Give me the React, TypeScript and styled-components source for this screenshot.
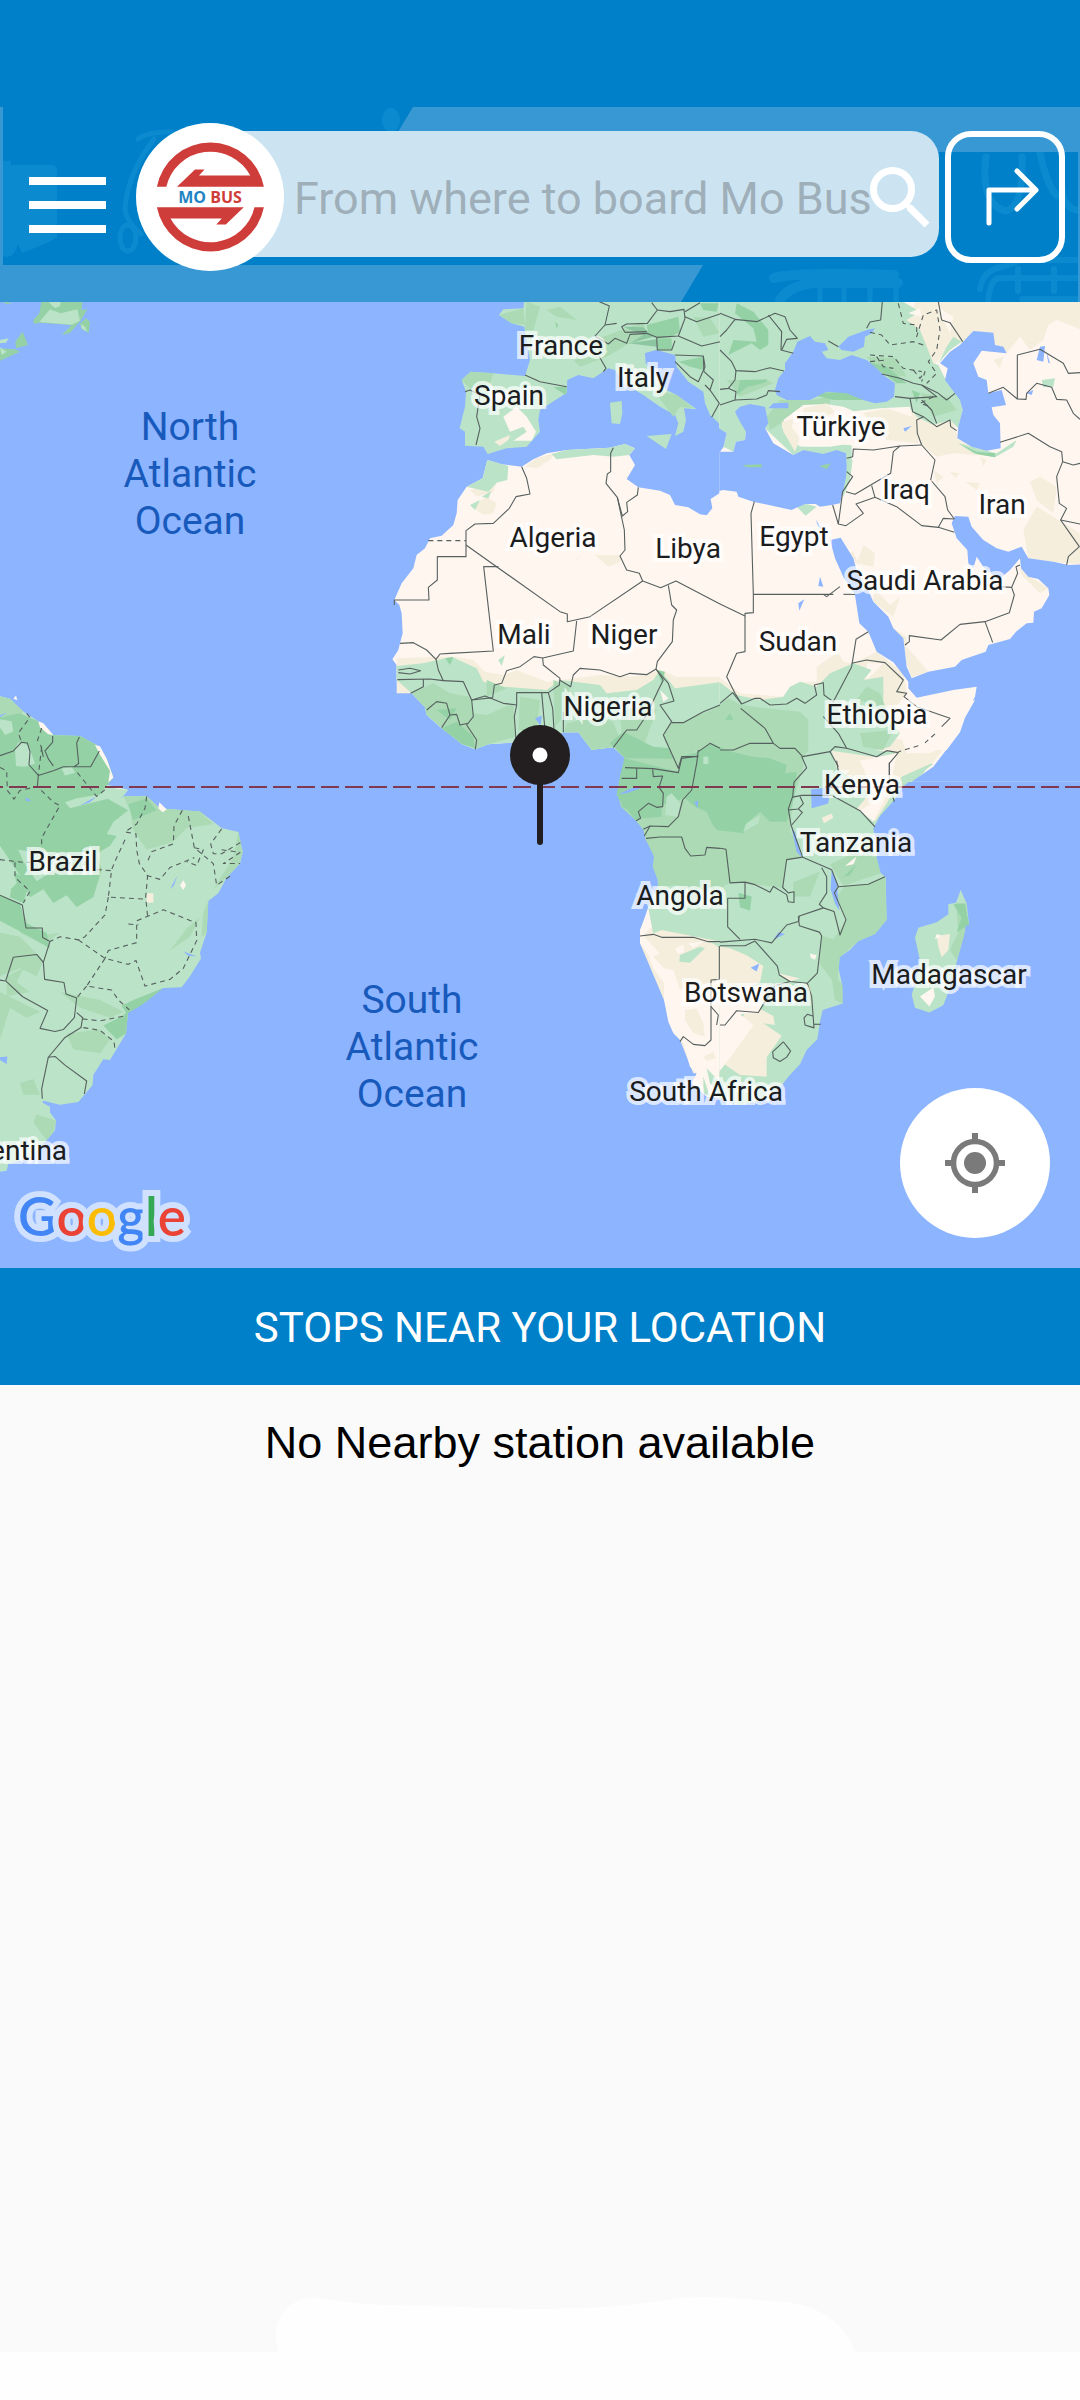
import React from "react";
import styled, { createGlobalStyle } from "styled-components";

const color = {
  brand: "#0080c8",
  band: "#3898d3",
  sketch: "#0c8ad0",
  field: "#cce4f2",
  hint: "#9fafb9",
  sea: "#8cb4ff",
  sand: "#fff6f0",
  dune: "#f5eedd",
  leaf: "#bbe3c7",
  grove: "#abdab5",
  forest: "#94d2a6",
  border: "#56605f",
  page: "#fafafa",
};

const GlobalStyle = createGlobalStyle`
  *, *::before, *::after { box-sizing: border-box; }
  body { margin: 0; background: #fff; font-family: Roboto, "Noto Sans", sans-serif; }
  button { padding: 0; border: 0; background: none; cursor: pointer; font: inherit; }
`;

const Page = styled.div`
  display: flex;
  flex-direction: column;
  min-height: 100vh;
`;

const StatusBar = styled.div`
  height: 107px;
  background: ${color.brand};
`;

const Header = styled.header`
  position: relative;
  display: flex;
  align-items: center;
  padding: 16px 15px 31px 29px;
  background: ${color.brand};
`;

const Backdrop = styled.svg`
  position: absolute;
  inset: 0;
  width: 100%;
  height: 100%;
`;

const MenuButton = styled.button`
  position: relative;
  display: flex;
  flex-direction: column;
  flex: none;
  gap: 16px;
  width: 77px;
  margin: 16px 30px 0 0;
`;

const MenuLine = styled.span`
  height: 8px;
  background: #fff;
`;

const Logo = styled.div`
  position: relative;
  z-index: 1;
  display: grid;
  flex: none;
  place-items: center;
  width: 148px;
  height: 148px;
  border-radius: 50%;
  background: #fff;
`;

const LogoMark = styled.svg`
  grid-area: 1 / 1;
  width: 148px;
  height: 148px;
`;

const LogoText = styled.span`
  grid-area: 1 / 1;
  color: #cf3d3a;
  font: bold 16px/20px "Open Sans", sans-serif;
`;

const LogoTone = styled.span`
  color: #1f83c3;
`;

const SearchForm = styled.form`
  position: relative;
  display: flex;
  flex: 1;
  align-items: center;
  min-width: 0;
  height: 126px;
  margin: 0 6px 6px -74px;
  padding: 6px 9px 0 84px;
  border-radius: 0 28px 28px 0;
  background: ${color.field};
`;

const SearchInput = styled.input`
  flex: 1;
  min-width: 0;
  height: 100%;
  padding: 2px 0 0;
  border: 0;
  outline: 0;
  background: none;
  color: #37474f;
  font: 45px/54px Roboto, sans-serif;
  &::placeholder { color: ${color.hint}; opacity: 1; }
`;

const IconButton = styled.button`
  display: grid;
  flex: none;
  place-items: center;
`;

const DirectionsButton = styled(IconButton)`
  position: relative;
  width: 120px;
  height: 132px;
  border: 6px solid #fff;
  border-radius: 26px;
`;

const MapArea = styled.main`
  position: relative;
  height: 966px;
  overflow: hidden;
  background: ${color.sea};
`;

const MapDrawing = styled.svg`
  display: block;
  width: 100%;
  height: 100%;
`;

const MapLabel = styled.span<{ $x: number; $y: number }>`
  position: absolute;
  left: calc(50% + ${(p) => p.$x - 540}px);
  top: ${(p) => p.$y - 302}px;
  transform: translate(-50%, -50%);
  color: #1b1c1e;
  font-size: 28px;
  line-height: 32px;
  white-space: nowrap;
  -webkit-text-stroke: 8px rgba(255, 255, 255, 0.7);
  paint-order: stroke fill;
`;

const OceanLabel = styled(MapLabel)`
  width: min-content;
  color: #185abc;
  font-size: 39px;
  line-height: 47px;
  text-align: center;
  white-space: normal;
  -webkit-text-stroke: 0;
`;

const Pin = styled.svg`
  position: absolute;
  left: 50%;
  top: 50%;
  transform: translate(-50%, -50%);
`;

const Attribution = styled.div`
  position: absolute;
  left: 18px;
  bottom: 20px;
  display: flex;
  font: 600 53px/64px Lato, sans-serif;
  -webkit-text-stroke: 12px #d0e1ff;
  paint-order: stroke fill;
`;

const AttributionLetter = styled.span<{ $tone: string }>`
  color: ${(p) => p.$tone};
`;

const LocateButton = styled(IconButton)`
  position: absolute;
  right: 30px;
  bottom: 30px;
  width: 150px;
  height: 150px;
  border-radius: 50%;
  background: #fff;
`;

const SectionTitle = styled.h2`
  margin: 0;
  padding: 36px 24px 33px;
  background: ${color.brand};
  color: #fff;
  font-size: 42px;
  font-weight: 400;
  line-height: 48px;
  text-align: center;
`;

const StopList = styled.section`
  display: flex;
  flex: 1;
  flex-direction: column;
  align-items: center;
  justify-content: space-between;
  background: ${color.page};
`;

const EmptyMessage = styled.p`
  margin: 0;
  padding: 32px 24px;
  color: #000;
  font: 45px/52px "Liberation Sans", Arial, sans-serif;
  text-align: center;
`;

const Swell = styled.svg`
  display: block;
`;

const NavigationInset = styled.div`
  height: 48px;
  background: #fefefe;
`;

function HeaderBackdrop() {
  return (
    <Backdrop viewBox="0 0 1080 195" preserveAspectRatio="none" aria-hidden="true">
      <g fill={color.sketch}>
        <ellipse cx="391" cy="13" rx="9" ry="12" />
        <path d="M3 54h8v4h42q4 0 4 8v64q-6 5-35 16l-6-14H3Z" />
        <ellipse cx="7" cy="132" rx="11" ry="18" />
      </g>
      <g fill="none" stroke={color.sketch} strokeWidth="5" strokeLinecap="round">
        <path d="M138 32q10-8 34-7M154 32q-26 34-29 69 0 12 16 26" />
        <ellipse cx="128" cy="131" rx="8" ry="13" />
        <path d="M774 171q20-6 120-3M780 193q8-13 32-17h86" strokeWidth="10" />
        <path d="M820 180v15M844 180v15M870 180v15M896 180v15" />
        <path d="M986 50q-6 48 20 54 18-5 16-54M1040 45q6 32 17 44M1062 82q0 19 18 22" strokeWidth="7" />
        <path d="M980 182q3-19 22-22l20-7h58M988 195q2-24 12-24h80M1018 162v22M1054 162v22M1022 192h58" strokeWidth="6" />
      </g>
      <path fill={color.band} d="M413 0h667v45H386Z" />
      <path fill={color.band} d="M0 0h3v158h700l-22 37H0ZM1078 40h2v155h-2Z" />
    </Backdrop>
  );
}

function BrandLogo() {
  return (
    <Logo>
      <LogoMark viewBox="0 0 148 148" aria-hidden="true">
        <g fill="#cf3d3a">
          <path id="half" d="M20.9 63.7A54.5 54.5 0 0 1 127.9 63.7H41L59 46.5h9.5l-5.5 6h51.3A45.3 45.3 0 0 0 30.3 63.7Z" />
          <use href="#half" transform="rotate(180 74.4 74)" />
        </g>
      </LogoMark>
      <LogoText>
        <LogoTone>MO</LogoTone> BUS
      </LogoText>
    </Logo>
  );
}

const line = {
  fill: "none",
  stroke: color.border,
  strokeWidth: 1.1,
  strokeLinejoin: "round" as const,
};

/* Each region is traced in its own grid and scaled into the map's 1080-wide space. */
const grid = {
  greenland: "translate(0 300) scale(.33333)",
  northWest: "translate(360 300) scale(.33333)",
  northEast: "translate(720 300) scale(.33333)",
  central: "translate(600 640) scale(.33333)",
  southWest: "translate(360 700) scale(.33333)",
  southEast: "translate(720 700) scale(.33333 .35714)",
  america: "translate(0 660) scale(.33333 .39526)",
};

function Borders({ at, lines, dashed }: { at: string; lines: string[]; dashed?: boolean }) {
  return (
    <g transform={at} {...line} strokeDasharray={dashed ? "5 4" : undefined}>
      {lines.map((points) => (
        <polyline key={points} points={points} vectorEffect="non-scaling-stroke" />
      ))}
    </g>
  );
}

function Shapes({ at, fill, shapes }: { at: string; fill: string; shapes: string[] }) {
  return (
    <g transform={at} fill={fill}>
      {shapes.map((points) => (
        <polygon key={points} points={points} />
      ))}
    </g>
  );
}

function World() {
  return (
    <MapDrawing viewBox="0 302 1080 966" preserveAspectRatio="xMidYMid slice" aria-hidden="true">
      {/* North America */}
      <Shapes at={grid.greenland} fill={color.forest} shapes={[
        "125,0 248,0 245,30 262,28 242,62 210,98 185,105 215,75 118,68 102,72 100,60 118,40",
        "0,145 45,148 60,155 0,182", "68,95 84,135 48,145 46,125", "240,70 258,55 270,65 266,98 245,88",
        "0,0 38,12 20,12",
      ]} />
      <Shapes at={grid.greenland} fill={color.leaf} shapes={[
        "150,28 182,40 232,28 240,62 215,74 118,66", "145,5 182,5 180,18 165,25", "0,120 26,115 18,128 0,130",
        "0,142 20,155 5,165", "242,72 255,80 262,95 246,86",
      ]} />

      {/* South America */}
      <Shapes at={grid.america} fill={color.leaf} shapes={[
        "0,92 30,98 70,130 115,155 160,190 240,192 290,215 320,250 340,297 320,315 385,328 370,345 440,345 480,375 550,380 600,383 665,425 715,435 728,485 720,515 680,550 655,590 625,610 620,690 600,740 603,755 570,800 545,828 490,830 430,855 385,885 378,945 330,1012 310,1010 280,1050 278,1075 235,1118 180,1125 130,1115 128,1120 150,1130 150,1145 168,1165 165,1190 140,1215 90,1260 25,1275 20,1292 0,1295",
      ]} />
      <Shapes at={grid.america} fill={color.grove} shapes={[
        "0,92 30,98 70,130 50,150 0,140", "370,345 440,345 480,375 600,383 640,415 560,425 520,460 440,480 400,430 390,380",
        "0,690 60,700 130,760 110,800 60,780 0,800", "625,610 620,690 605,700 610,640", "70,640 100,700 180,690 130,720 60,690",
        "180,840 300,860 370,890 330,905 240,880", "200,945 300,935 330,960 300,995 220,985", "110,1150 168,1165 160,1195 140,1215 100,1170",
        "715,435 728,485 720,515 680,550 640,580 700,500", "20,800 70,780 50,815 90,840 20,850", "510,735 560,680 600,650 570,700",
        "60,1070 100,1060 120,1100 70,1100", "0,840 120,890 80,905 30,880 0,960",
      ]} />
      <Shapes at={grid.america} fill={color.forest} shapes={[
        "0,145 60,135 115,155 160,190 240,192 290,215 320,250 340,297 300,340 385,380 340,410 320,440 350,445 330,470 290,490 305,530 280,600 230,625 200,595 160,615 130,580 90,600 60,545 0,470",
        "40,535 90,560 70,615 30,600", "0,595 60,615 75,665 140,690 150,730 90,700 0,660",
        "440,350 470,380 400,405 385,365", "385,885 378,945 350,960 310,925 370,900", "400,860 490,830 430,870 380,895 365,875",
      ]} />
      <Shapes at={grid.america} fill={color.leaf} shapes={[
        "55,208 85,215 105,262 75,270 48,268 45,225", "0,150 35,155 40,180 15,190 0,170", "195,360 230,350 300,340 330,350 210,375",
        "55,480 135,490 165,530 110,560 70,510", "0,520 40,530 50,565 20,590 0,580", "185,275 215,270 225,285 195,292",
      ]} />
      <Shapes at={grid.america} fill={color.sand} shapes={[
        "115,155 130,160 160,190 145,188 120,170", "285,215 300,218 320,250 340,297 325,310 330,280 300,240", "478,360 500,378 488,385 475,375",
        "550,557 558,570 550,582 540,570", "40,98 48,90 52,102", "320,318 385,328 350,325",
      ]} />
      <Shapes at={grid.america} fill={color.dune} shapes={["440,590 460,590 460,614 440,614"]} />
      <Shapes at={grid.america} fill={color.sea} shapes={[
        "370,345 395,330 360,352", "510,580 532,545 522,570", "550,737 590,750 565,748", "240,368 290,345 270,360", "0,1005 22,1003 20,1022 0,1012", "0,140 22,133 0,145", "75,348 95,355 80,358",
      ]} />
      <Borders at={grid.america} lines={[
        "0,242 40,230 65,208 82,210 90,232 87,265 115,292 160,280 190,270 272,270 298,230",
        "115,292 112,320", "158,192 158,208 135,230 145,250 160,268", "238,195 230,210 236,262 222,270", "122,215 130,245",
        "0,595 67,620 78,678 127,678 128,702 150,712 130,765 134,808 192,816 198,845 230,855 223,905 190,935 165,940 120,932 143,887 68,852 17,812 0,810",
        "17,812 40,752 110,745 130,765", "230,892 248,905 243,930 195,955 145,1005 165,1003 195,1025 260,1065 253,1098",
        "145,1005 125,1085 127,1110",
      ]} />
      <Borders at={grid.america} dashed lines={[
        "80,135 90,145 55,185 65,208", "125,172 112,205", "125,220 115,292", "0,272 20,280 22,330 42,352 60,330 112,320 160,360 180,368 125,450 125,470",
        "232,285 290,345 320,325", "440,345 435,375 410,415 375,435 408,440 410,480 418,515 443,545 437,600 443,650",
        "375,455 350,500 335,530 325,600 437,605", "325,600 315,645 255,700 235,708 180,700 150,712", "235,708 315,755 385,770 408,760 435,825 510,808 550,780 590,710 588,665 490,632 410,660 410,715 325,735 315,755",
        "547,380 522,420 520,465 455,485 440,515", "565,395 583,475 640,515 650,570 690,547", "440,545 480,555 510,525 583,500", "665,427 632,465 640,490 665,490 725,460",
        "583,475 610,480 590,520 560,510", "665,480 720,487 670,515 720,515", "315,755 260,825 335,835 355,860 388,885", "260,825 230,855", "248,908 300,913 378,900",
        "250,930 300,937 342,965 345,985", "0,505 70,512 90,512", "290,530 335,533", "45,512 45,550 90,585 70,615", "385,668 415,670",
      ]} />

      {/* Europe and north-west Africa */}
      <Shapes at={grid.northWest} fill={color.leaf} shapes={[
        "493,0 1090,0 1090,382 1050,345 1035,310 1030,275 985,245 950,200 945,165 890,150 855,160 857,190 880,220 920,270 950,285 1010,328 972,325 978,360 970,395 945,408 955,370 945,345 900,320 850,285 800,255 765,210 745,205 700,235 655,225 622,240 620,278 540,330 535,360 540,395 500,440 440,445 383,462 370,440 315,437 315,395 299,385 315,320 318,275 305,240 332,215 400,220 495,228 510,180 493,80 455,70 417,45 430,28 490,25",
        "750,308 785,303 787,340 780,372 755,370", "860,408 935,402 918,447",
      ]} />
      <Shapes at={grid.northWest} fill={color.grove} shapes={[
        "417,45 490,25 495,75 455,70", "640,180 720,165 700,120 745,105 850,65 860,105 800,135 740,170 660,200", "500,5 540,20 520,90 495,90",
        "305,240 332,215 400,220 390,250 330,265", "880,270 950,285 1000,325 960,320 940,350", "1000,50 1050,55 1080,100 1030,110", "560,30 600,20 650,60 590,50",
      ]} />
      <Shapes at={grid.northWest} fill={color.forest} shapes={[
        "860,75 955,50 960,95 930,112 890,115 865,100", "890,115 935,115 935,148 892,150", "585,65 595,75 590,85", "955,185 1030,170 1030,210 990,200",
        "580,262 620,260 618,285", "1020,10 1075,10 1070,35 1030,30",
      ]} />
      <Shapes at={grid.northWest} fill="#8bc6a0" shapes={["790,80 850,82 880,110 810,130 850,105", "805,130 890,118 890,140"]} />
      <Shapes at={grid.northWest} fill={color.sand} shapes={[
        "382,480 425,493 485,500 520,478 560,460 620,450 750,443 795,432 825,445 808,465 825,495 800,537 835,562 900,572 930,585 945,615 985,622 1020,643 1040,646 1057,625 1052,597 1090,572 1090,1445 790,1445 795,1375 760,1342 695,1349 655,1297 610,1297 580,1310 450,1328 385,1333 345,1348 305,1332 265,1300 245,1285 200,1245 195,1222 155,1180 110,1140 110,1095 97,1078 115,1050 120,1030 128,1000 125,940 118,915 103,900 125,850 160,805 170,765 195,745 210,715 245,707 280,675 290,640 293,600 320,560 368,535",
        "430,350 470,320 500,350 528,395 515,422 460,422 500,395 490,380 450,395", "385,285 430,270 450,300 400,310",
      ]} />
      <Shapes at={grid.northWest} fill={color.dune} shapes={[
        "110,1075 230,1070 285,1070 340,1080 375,1115 430,1125 470,1110 560,1145 600,1140 720,1125 820,1130 900,1110 950,1130 1090,1130 1090,1180 110,1180",
        "495,500 530,475 585,460 570,480 530,505", "705,765 785,765 780,785 745,800", "335,620 380,590 410,610 400,640 370,645", "330,570 385,560 410,545 400,575 350,590",
        "403,425 450,405 445,420 420,438", "645,780 662,762 655,775",
      ]} />
      <Shapes at={grid.northWest} fill={color.leaf} shapes={[
        "382,480 445,498 442,540 410,548 385,575 320,560 368,535", "575,462 620,450 750,443 795,432 825,445 808,465 760,470 700,465 590,478",
        "330,615 360,600 345,630", "365,590 395,572 385,595", "415,1080 435,1065 425,1098",
        "110,1098 190,1090 275,1070 350,1105 370,1145 430,1160 560,1170 600,1140 720,1155 740,1180 830,1170 880,1140 900,1110 945,1165 1090,1145 1090,1445 790,1445 795,1375 760,1342 695,1349 655,1297 610,1297 580,1310 450,1328 385,1333 345,1348 305,1332 265,1300 245,1285 200,1245 195,1222 155,1180 110,1140",
      ]} />
      <Shapes at={grid.northWest} fill={color.grove} shapes={[
        "155,1180 220,1150 270,1180 330,1190 340,1240 380,1245 460,1210 465,1310 385,1333 345,1348 265,1300 200,1245 195,1222",
        "612,1297 620,1270 700,1250 760,1265 780,1320 760,1342 695,1349 655,1297", "580,1140 630,1160 620,1240 585,1280", "780,1250 830,1200 890,1230 850,1340 795,1375",
        "380,1140 440,1165 380,1190", "480,1190 540,1200 530,1290 475,1290",
      ]} />
      <Shapes at={grid.northWest} fill={color.forest} shapes={[
        "245,1285 290,1265 340,1310 345,1345 305,1332", "750,1330 790,1295 820,1310 880,1340 930,1345 955,1405 950,1420 790,1420 795,1375",
        "230,1230 290,1225 270,1260", "890,1110 915,1115 905,1150", "255,1075 280,1072 270,1095",
      ]} />
      <Shapes at={grid.northWest} fill={color.sand} shapes={["900,1170 925,1195 910,1205", "985,1020 1010,1018 1005,1028"]} />
      <Shapes at={grid.northWest} fill={color.sea} shapes={["530,1253 545,1247 542,1275", "855,160 890,150 900,190 880,185"]} />

      {/* Middle East and east Africa */}
      <Shapes at={grid.northEast} fill={color.sand} shapes={["-2,0 1085,0 1085,1445 -2,1445"]} />
      <Shapes at={grid.northEast} fill={color.dune} shapes={[
        "590,0 1085,0 1085,90 1010,60 985,75 970,120 930,150 900,110 860,160 780,150 700,120 640,200 560,60", "560,310 640,340 700,360 715,420 830,470 700,460 650,470 600,430",
        "910,690 950,620 1000,650 1080,700 1080,793 1000,785 925,775", "640,510 670,530 650,550", "690,515 720,520 705,535", "735,545 780,550 770,570", "780,470 800,480 790,500", "930,545 960,530 1010,560 1000,640 950,600",
        "-2,1132 60,1180 190,1190 240,1145 290,1145 290,1100 355,1055 370,1085 400,1090 470,1055 550,1120 560,1180 520,1230 560,1250 500,1300 540,1320 650,1280 700,1310 620,1410 540,1400 450,1440 380,1440 330,1350 -2,1300",
        "430,735 465,760 460,800 410,790", "460,860 510,915 540,890 520,950 460,905", "520,985 560,1010 560,1040 625,1115 575,1132", "380,760 400,755 420,800",
        "895,800 930,830 985,865 960,880 910,830", "820,180 850,170 840,205",
      ]} />
      <Shapes at={grid.northEast} fill={color.sand} shapes={["440,1090 490,1090 440,1140", "550,1190 660,1240 620,1300 560,1270", "600,1300 690,1290 650,1350 560,1390"]} />
      <Shapes at={grid.northEast} fill={color.leaf} shapes={[
        "-2,0 540,0 600,35 560,60 600,90 640,190 655,195 675,235 720,290 728,330 715,385 690,360 640,375 590,350 575,330 530,345 440,350 370,320 300,310 220,330 185,380 215,430 250,440 330,440 395,430 395,480 380,500 360,480 250,450 220,465 135,385 100,310 78,395 75,420 48,425 40,455 10,440 20,400 -2,390",
        "230,620 260,612 290,620 257,647", "700,110 725,125 690,150 655,190 680,140",
        "-2,1146 50,1185 120,1200 190,1190 210,1160 240,1145 290,1160 330,1120 400,1090 455,1110 430,1140 490,1130 490,1230 540,1300 510,1340 440,1360 350,1340 360,1400 380,1445 -2,1445",
        "520,1420 560,1400 600,1400 640,1375 610,1420 580,1445 500,1445", "715,430 830,460 890,420 880,440 825,472 760,460", "965,240 1005,235 1000,260 970,262", "380,480 398,480 390,540 370,590 362,570",
      ]} />
      <Shapes at={grid.northEast} fill={color.grove} shapes={[
        "440,1160 480,1180 500,1230 420,1200 370,1250", "420,1300 520,1290 490,1350 430,1340",
        "180,300 270,300 330,290 330,310 240,330 200,360 150,390 140,350", "440,170 530,175 560,230 480,220", "600,280 680,290 710,330 640,350", "20,240 140,240 160,250 60,290",
      ]} />
      <Shapes at={grid.northEast} fill={color.forest} shapes={[
        "50,10 100,35 145,90 145,135 120,150 95,130 25,165 40,120 110,125 100,85 45,40", "60,240 140,238 140,246 80,262 50,285", "440,185 500,200 560,250 530,250 490,220",
        "715,430 770,455 825,460 825,472 770,462", "260,280 380,275 440,300 340,300", "575,270 600,280 590,310",
      ]} />
      <Shapes at={grid.northEast} fill={color.sand} shapes={[
        "190,360 250,315 320,312 350,340 480,325 570,320 590,430 540,435 430,440 300,425 240,440 210,400", "565,40 600,25 605,50", "650,20 700,50 690,100",
      ]} />
      <Shapes at={grid.northEast} fill={color.dune} shapes={["250,325 320,310 345,335 320,350 250,350", "430,340 500,325 590,355 595,430 500,420", "185,365 225,355 215,380 240,415 225,455 205,420 190,395"]} />
      <Shapes at={grid.northEast} fill={color.sea} shapes={[
        "-2,455 40,455 48,425 75,420 78,395 60,365 45,335 60,320 90,312 135,320 145,370 135,385 160,430 220,465 250,450 310,462 350,450 378,460 380,500 378,530 370,570 360,610 335,615 300,620 287,612 257,612 232,622 215,630 100,605 55,590 50,575 10,570 -2,573",
        "-3,385 20,400 10,442 -3,460",
        "220,155 232,125 270,108 285,125 315,130 325,150 305,155 320,175 360,180 395,165 440,180 470,205 490,225 525,250 522,290 500,305 465,310 430,300 380,280 320,275 270,300 200,300 170,285 165,270 175,235 195,210 195,190",
        "355,140 385,110 440,90 465,85 455,100 435,110 432,140 400,155 365,150", "145,325 160,310 205,308 205,325",
        "760,93 820,98 825,135 850,140 860,160 785,152 760,190 775,230 800,240 805,280 845,270 858,315 815,322 820,345 840,370 842,445 800,452 755,440 712,415 715,380 728,330 720,300 675,240 683,205 660,190 690,155 720,135",
        "575,1135 625,1115 705,1100 725,1080 797,1055 805,1035 870,1017 888,995 920,970 940,968 942,935 965,925 988,885 985,865 955,837 925,830 903,805 900,775 870,810 835,840 790,800 770,770 760,805 745,790 742,750 710,715 695,670 705,648 745,650 755,680 790,720 830,745 865,755 905,740 925,775 1000,785 1045,795 1085,793 1085,1445 575,1445 640,1400 690,1335 720,1270 755,1210 765,1190 770,1160 700,1170 590,1193 565,1165 565,1145 520,1087 470,1055 445,995 418,970 405,885 370,830 345,775 330,720 362,713 400,775 410,810 440,860 460,905 505,950 520,985 550,1015 560,1100",
        "288,660 308,690 295,680", "300,830 310,860 295,858", "235,910 253,898 238,932", "960,140 975,138 970,185 950,180", "978,150 990,190 985,188", "550,385 575,378 555,395", "920,280 940,270 935,285",
      ]} />
      <Shapes at={grid.northEast} fill={color.forest} shapes={["68,495 125,493 125,502 80,502", "298,498 332,490 320,508"]} />

      {/* Southern Africa */}
      <Shapes at={grid.southWest} fill={color.grove} shapes={[
        "793,175 793,205 780,230 778,260 770,283 778,300 783,320 828,362 850,390 858,420 882,470 878,500 893,540 895,600 865,620 870,650 880,700 1083,725 1083,178",
      ]} />
      <Shapes at={grid.southWest} fill={color.leaf} shapes={["893,560 1083,545 1083,730 880,705 865,620"]} />
      <Shapes at={grid.southWest} fill={color.forest} shapes={[
        "793,175 955,215 900,260 905,320 850,345 828,362 778,300 770,283 780,230", "905,465 912,490 905,492",
      ]} />
      <Shapes at={grid.southWest} fill={color.dune} shapes={["865,630 880,700 905,690 1083,725 1083,1120 1000,1120 912,900 840,730"]} />
      <Shapes at={grid.southWest} fill={color.sand} shapes={[
        "865,620 875,680 850,708 900,760 880,770 912,805 940,810 960,870 1083,840 1083,1195 1040,1190 995,1150 1010,1120 990,1100 970,1030 940,1000 925,965 912,900 912,850 880,805 865,765 840,730 840,690 855,650",
        "945,745 970,735 972,755 955,762", "985,730 1030,725 1000,745",
      ]} />
      <Shapes at={grid.southWest} fill={color.dune} shapes={["975,930 1010,925 1030,970 1035,1010 1000,1000 975,960", "1030,1070 1060,1055 1068,1075 1040,1082"]} />
      <Shapes at={grid.southWest} fill={color.leaf} shapes={["960,765 1020,740 1035,745 990,788 958,785", "1040,1105 1083,1150 1083,1190 1050,1150", "1030,1130 1050,1190 1030,1180", "1050,725 1083,730 1083,745"]} />

      <Shapes at={grid.southEast} fill={color.leaf} shapes={[
        "-2,70 380,132 560,150 640,180 600,205 545,245 523,280 480,325 460,360 468,400 470,450 482,485 497,495 500,615 465,655 415,675 390,700 350,725 355,750 365,790 368,850 308,868 300,900 292,950 260,980 240,1020 205,1055 180,1085 130,1120 60,1135 -2,1115",
        "722,532 740,570 747,628 735,630 730,665 710,735 680,830 670,855 628,875 585,862 575,825 590,780 600,730 585,665 595,638 650,622 685,600 685,572 708,568",
      ]} />
      <Shapes at={grid.southEast} fill={color.grove} shapes={[
        "375,520 440,516 495,495 500,615 465,655 415,675 360,720 350,800 300,740 305,660 340,670 380,615 350,550", "330,460 400,430 470,440 482,485 370,520", "220,510 300,480 270,550 220,550", "708,568 740,570 735,650 710,730 690,700 715,650", "330,750 368,800 368,850 345,840",
      ]} />
      <Shapes at={grid.southEast} fill={color.forest} shapes={[
        "55,540 95,550 90,590 60,580", "700,572 735,570 747,628 710,650 725,610", "370,495 410,460 390,490",
      ]} />
      <Shapes at={grid.southEast} fill={color.dune} shapes={[
        "335,142 470,160 535,148 640,150 680,120 640,175 545,215 500,290 465,340 410,305 450,260 350,190", "305,330 335,318 340,330 312,345", "-2,690 30,695 80,715 130,745 120,790 30,830 -2,860", "90,850 160,885 165,910 130,905 185,940 140,1000 140,1055 60,1050 -2,1010",
        "650,660 690,655 685,700 665,720 655,690", "175,765 240,780 210,788", "640,705 650,725",
      ]} />
      <Shapes at={grid.southEast} fill={color.sand} shapes={[
        "420,170 530,150 510,250 460,340 420,310 470,280", "530,60 765,0 735,50 720,90 680,140 640,140 560,150", "-2,810 60,800 150,800 115,875 60,880 100,910 40,990 -2,1040", "270,710 290,715 285,727 272,722", "600,830 640,805 645,830 628,858", "650,655 665,660 645,670", "375,465 410,438 400,460",
      ]} />

      {/* Congo basin */}
      <Shapes at={grid.central} fill={color.grove} shapes={[
        "215,248 250,245 345,205 385,175 425,195 500,205 600,215 625,240 625,330 610,350 610,380 580,480 570,570 605,650 560,660 550,745 520,740 435,730 395,725 300,780 180,700 165,640 135,595 150,560 230,540 290,330 232,380 190,290",
      ]} />
      <Shapes at={grid.central} fill={color.forest} shapes={[
        "75,383 235,395 245,350 295,335 330,310 395,335 460,350 510,355 560,375 555,400 590,395 583,470 560,545 510,545 480,515 435,555 430,580 350,570 335,550 320,515 285,500 255,475 185,495 185,530 130,535 65,500 60,440",
        "390,220 400,240 375,240",
      ]} />
      <Shapes at={grid.central} fill={color.leaf} shapes={["200,470 215,460 240,490 235,530 195,525", "430,575 440,550 480,525 475,550", "310,350 325,350 325,372 310,372", "600,500 620,520 600,560 580,550"]} />
      <Shapes at={grid.southWest} fill={color.sea} shapes={["775,283 815,265 850,262 800,280", "1003,305 1015,303 1012,325", "525,55 545,48 540,75"]} />
      <Shapes at={grid.southEast} fill={color.sea} shapes={[
        "273,250 330,245 325,290 275,303", "335,475 350,510 358,590 345,570 332,530", "215,360 225,370 245,440 230,425", "160,672 175,650 195,655", "92,750 118,738 110,760",
      ]} />

      {/* Country borders */}
      <Borders at={grid.northWest} lines={[
        "485,500 500,535 510,582 468,590 448,625 400,670 345,672 318,692 318,770 232,770 232,840 205,862 207,900 103,900 103,915",
        "318,735 600,935 622,942 622,965 690,950 848,843 902,863 948,843 1080,912", "848,843 838,820 800,810 780,768 795,750 793,690 772,592 738,550 742,522 752,515 752,460 760,443",
        "772,592 787,648 803,635 800,607 832,585 835,562", "415,800 371,800 400,1053 270,1060 240,1062 228,1078", "120,1030 160,1028 200,1050 228,1078 235,1110 250,1142 210,1137 112,1139",
        "650,963 640,1053 548,1074 522,1070 480,1100 440,1112 425,1150 403,1155 398,1193 335,1200", "548,1074 550,1095 600,1135 598,1155 565,1178 470,1178 470,1215 463,1250 468,1320",
        "565,1178 578,1225 582,1290", "545,1178 555,1290", "610,1297 610,1235", "598,1140 632,1160 640,1125 660,1105 720,1110 780,1130 810,1120 860,1124 888,1107 892,1085 937,1025 940,960 950,930 935,915 925,856",
        "888,1107 910,1140 895,1170 860,1245 830,1290 800,1290 760,1342", "888,1107 925,1150 942,1203 900,1215 935,1265 910,1305 955,1405 965,1370 1015,1370", "935,1268 970,1268 1030,1235 1080,1215",
        "1015,1355 1050,1330 1080,1345", "250,1142 310,1145 335,1200 340,1250 320,1275 350,1320 346,1348", "200,1230 230,1205 260,1210 270,1245 245,1283", "270,1245 290,1243 300,1275 325,1270",
        "335,1200 375,1188 430,1210 470,1215", "190,1137 190,1160 152,1180", "115,1110 150,1105 182,1112 150,1122 115,1118",
        "495,225 540,245 620,260", "315,275 330,270 360,285 350,350 360,385 348,435", "718,5 748,18 735,75 705,108 745,132 765,115 800,130 810,103 860,100 890,112", "735,75 770,70", "718,170 738,205 730,215",
        "860,95 795,97 785,80 800,72 862,70 892,30 875,8", "892,30 930,35 972,28 975,55 962,90 955,108 890,112", "975,50 1010,65 1080,42", "890,112 892,150 935,150 945,122", "945,165 1030,168 1035,200 1015,245 990,230 945,185",
        "955,108 1025,138 1080,125", "1030,168 1032,215 1060,240 1050,270 1035,255", "1050,270 1078,310 1055,352", "975,35 1020,8",
      ]} />
      <Borders at={grid.northWest} dashed lines={["205,722 318,722"]} />
      <Borders at={grid.northEast} lines={[
        "103,605 93,640 100,883 100,938 75,940 75,1055 50,1060 20,1130 45,1180 65,1212", "0,912 75,948", "100,883 340,883", "310,883 320,890 360,860", "370,883 405,883",
        "0,1210 38,1178 65,1212 105,1195 120,1195 150,1215 200,1212 230,1195 255,1210 290,1185 283,1155 310,1148 312,1185 340,1205 395,1100 408,1018 445,995",
        "62,1225 135,1285 160,1330 180,1345 225,1345 248,1370 330,1355 355,1400", "0,1350 40,1350 90,1330 160,1330",
        "395,1090 440,1080 495,1088 550,1140 530,1175 560,1180 552,1190 590,1220 690,1255 665,1280", "310,1250 355,1300 380,1345 470,1370 500,1352 535,1358 508,1390 508,1440", "330,1355 345,1340 380,1345",
        "380,475 398,470 400,447 460,450 540,438 605,435", "540,438 520,455 512,520 405,583 378,575", "455,557 465,592 530,620 605,677 655,682 703,697", "655,682 670,655 703,657", "465,592 408,612 430,640 378,677 355,672 338,615", "355,672 368,575 398,530 380,515",
        "605,435 645,480 632,540 675,590 683,630 703,657", "605,435 592,400 590,360 610,350 650,380 690,360 692,380 710,392", "525,290 570,295 578,335 610,350", "485,222 540,235 580,250 605,255 655,280 680,300 705,280", "570,295 650,290 605,255", "605,300 635,330 650,370",
        "555,1035 568,1025 568,1007 663,1020 720,973 795,965 868,938 883,885 875,862 893,820 888,800 900,795", "795,965 818,1027", "830,860 875,862",
        "840,427 925,400 990,440 1025,455 1028,485 1010,530 1018,610 1040,625 1022,660 1050,700 1078,740 1045,770 1040,795", "1028,485 1060,495 1080,490", "1022,660 1080,672",
        "805,280 850,262 892,297 892,165 960,148 1030,190 1045,220 1080,218", "892,297 918,298 920,280 950,250 995,262 1010,298 1040,300 1060,340 1080,358", "655,5 665,60 690,68 715,105 728,125", "487,5 482,60 450,66 440,85",
        "0,110 20,90 45,58 110,65 165,40 195,50 210,90 232,115 200,118 185,150", "145,45 185,95 183,150 220,160", "0,150 35,185 48,212 105,215 150,203 192,213", "48,212 45,240 25,265 0,268", "25,265 48,275 45,300 0,315", "45,300 110,297 140,285 145,272 180,275", "325,123 355,140", "0,40 45,58",
      ]} />
      <Borders at={grid.northEast} dashed lines={[
        "535,10 550,70 590,75 590,110 610,45 650,30 660,90 650,150 625,185 650,220 620,250", "450,97 485,105 510,135 580,125 610,135", "450,165 520,170 550,205 605,215", "470,170 490,200 520,205", "580,210 600,235 615,215 605,245", "450,185 500,180", "640,290 600,310 630,320",
      ]} />
      <Borders at={grid.southWest} lines={[
        "795,203 880,206 955,218 965,175 1015,168", "830,205 830,235 785,235", "878,208 880,230 908,228 897,262 910,280 908,320 890,322 865,310 835,335 842,355 828,362",
        "1015,150 1010,190 995,270 968,300 955,350 925,380 870,378 850,388", "870,378 853,408", "858,415 900,411 965,411 975,445 992,468 1035,465 1040,442 1080,445", "840,708 880,703 905,712 1000,712 1045,725 1080,725",
        "1078,738 1078,838 1053,840 1053,1020 1035,1037 1000,1033 970,1010 960,1025", "1053,920 1075,945 1070,975",
      ]} />
      <Borders at={grid.southEast} lines={[
        "508,175 508,215", "245,158 260,190 222,230 218,270 205,305 213,350 248,440 335,475", "218,272 245,267 335,267 420,310 465,355", "350,170 355,200", "240,270 250,290 235,305 205,308", "235,305 247,315 215,350",
        "0,415 18,418 30,512 75,510 105,517 150,538 160,522 200,545 205,565 222,567 222,537 205,540 188,525 200,447 248,440", "75,510 75,555 23,555 23,635 60,670", "0,678 105,670 155,680 200,630 235,620 238,605 310,582 298,572 320,540 320,495 305,470",
        "335,475 355,523 445,516 495,495", "355,523 343,540 378,615 360,658 342,592 310,582", "0,688 75,688 105,675 172,745 178,770 210,788 262,793 292,765 305,660 298,650 238,632 235,605", "210,788 165,800 115,875 50,870 15,910 0,910",
        "262,793 275,830 282,918 255,910 252,890 262,880 278,885", "282,908 302,908", "190,957 212,983 200,1000 180,1012 160,1002 158,985 190,957", "518,270 523,285",
      ]} />
      <Borders at={grid.southEast} dashed lines={["645,95 615,120", "595,128 535,145"]} />

      <path d="M-15 787H1080" stroke="#7f3a52" strokeWidth="2" strokeDasharray="18 6" fill="none" />
    </MapDrawing>
  );
}

const places: [string, number, number][] = [
  ["France", 561, 346],
  ["Spain", 509, 396],
  ["Italy", 643, 378],
  ["Algeria", 553, 538],
  ["Libya", 688, 549],
  ["Mali", 524, 635],
  ["Niger", 624, 635],
  ["Nigeria", 608, 707],
  ["Türkiye", 841, 427],
  ["Iraq", 906, 490],
  ["Iran", 1002, 505],
  ["Egypt", 794, 537],
  ["Saudi Arabia", 925, 581],
  ["Sudan", 798, 642],
  ["Ethiopia", 877, 715],
  ["Kenya", 862, 785],
  ["Tanzania", 856, 843],
  ["Madagascar", 949, 975],
  ["Botswana", 746, 993],
  ["South Africa", 706, 1092],
  ["Angola", 680, 896],
  ["Brazil", 63, 862],
  ["Argentina", 7, 1151],
];

const oceans: [string, number, number][] = [
  ["North Atlantic Ocean", 190, 474],
  ["South Atlantic Ocean", 412, 1047],
];

const attribution: [string, string][] = [
  ["G", "#4285f4"],
  ["o", "#ea4335"],
  ["o", "#fbbc05"],
  ["g", "#4285f4"],
  ["l", "#34a853"],
  ["e", "#ea4335"],
];

export default function App() {
  return (
    <Page>
      <GlobalStyle />
      <StatusBar />
      <Header>
        <HeaderBackdrop />
        <MenuButton type="button" aria-label="Menu">
          <MenuLine />
          <MenuLine />
          <MenuLine />
        </MenuButton>
        <BrandLogo />
        <SearchForm role="search" onSubmit={(e) => e.preventDefault()}>
          <SearchInput type="text" aria-label="Boarding stop" placeholder="From where to board Mo Bus" />
          <IconButton type="submit" aria-label="Search">
            <svg width="60" height="60" viewBox="0 0 60 60" fill="none" stroke="#fff" strokeWidth="7">
              <circle cx="22.5" cy="22.5" r="19" />
              <path d="M36 37l6 6" strokeWidth="5" />
              <path d="M39 40L57 58" />
            </svg>
          </IconButton>
        </SearchForm>
        <DirectionsButton type="button" aria-label="Directions">
          <svg width="108" height="120" viewBox="951 137 108 120" fill="none" stroke="#fff" strokeWidth="5" strokeLinecap="round" strokeLinejoin="round">
            <path d="M989 223V190H1036M1017 171L1036 190L1017 209" />
          </svg>
        </DirectionsButton>
      </Header>

      <MapArea>
        <World />
        {places.map(([name, x, y]) => (
          <MapLabel key={name} $x={x} $y={y}>{name}</MapLabel>
        ))}
        {oceans.map(([name, x, y]) => (
          <OceanLabel key={name} $x={x} $y={y}>{name}</OceanLabel>
        ))}
        <Pin width="60" height="120" viewBox="0 0 60 120" aria-hidden="true">
          <path d="M30 50V117" stroke="#231f20" strokeWidth="6" strokeLinecap="round" />
          <circle cx="30" cy="30" r="30" fill="#231f20" />
          <circle cx="30" cy="30" r="7.5" fill="#fff" />
        </Pin>
        <Attribution>
          {attribution.map(([letter, tone], i) => (
            <AttributionLetter key={i} $tone={tone}>{letter}</AttributionLetter>
          ))}
        </Attribution>
        <LocateButton type="button" aria-label="My location">
          <svg width="60" height="60" viewBox="0 0 60 60" fill="none" stroke="#7a7a7a">
            <circle cx="30" cy="30" r="21.5" strokeWidth="5.5" />
            <circle cx="30" cy="30" r="11" fill="#7a7a7a" stroke="none" />
            <path d="M30 0V7M30 53V60M0 30H7M53 30H60" strokeWidth="6" />
          </svg>
        </LocateButton>
      </MapArea>

      <SectionTitle>STOPS NEAR YOUR LOCATION</SectionTitle>
      <StopList>
        <EmptyMessage>No Nearby station available</EmptyMessage>
        <Swell width="630" height="55" viewBox="225 0 630 55" aria-hidden="true">
          <path fill="#fefefe" d="M279 55C269 29 284 1 314 1C334 2 345 7 390 8C470 10 500 12 545 12C600 11 630 9 680 1C715-2 745 3 785 5C820 8 847 29 855 55Z" />
        </Swell>
      </StopList>
      <NavigationInset />
    </Page>
  );
}
